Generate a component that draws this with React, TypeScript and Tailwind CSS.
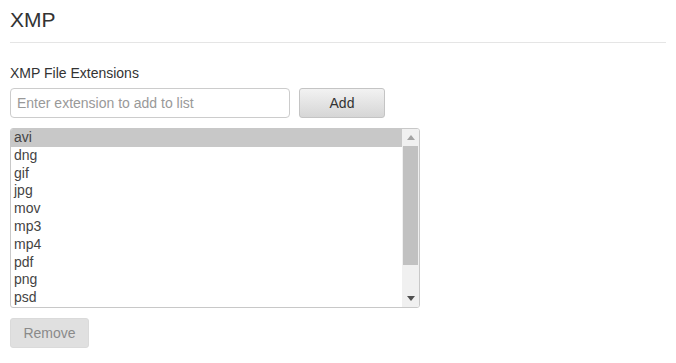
const extensions = ["avi", "dng", "gif", "jpg", "mov", "mp3", "mp4", "pdf", "png", "psd"];

const App = () => {
  return (
    <div className="min-h-screen bg-white px-[10px] pt-[8px] text-[#333] font-['Liberation_Sans',Arial,sans-serif]">
      {/* Section heading */}
      <h3 className="text-[21px] leading-[24px] pb-[10px] border-b border-[#e5e5e5]">XMP</h3>

      <label className="block mt-[22px] text-[14px] leading-[16px]">XMP File Extensions</label>

      {/* Add extension row */}
      <div className="mt-[7px] flex items-center">
        <input
          type="text"
          placeholder="Enter extension to add to list"
          className="w-[280px] h-[30px] px-[6px] text-[14px] border border-[#ccc] rounded-[4px] outline-none placeholder:text-[#999]"
        />
        <button className="ml-[9px] w-[86px] h-[30px] text-[14px] text-[#333] rounded-[3px] border border-[#c4c4c4] bg-gradient-to-b from-[#f2f2f2] to-[#d6d6d6]">
          Add
        </button>
      </div>

      {/* Extension list */}
      <div className="mt-[10px] w-[410px] h-[180px] border border-[#c8c8c8] rounded-[3px] flex overflow-hidden">
        <ul className="flex-1">
          {extensions.map((ext, i) => (
            <li
              key={ext}
              className={`pl-[3px] text-[14px] leading-[17.8px] text-[#444] ${i === 0 ? "bg-[#c8c8c8]" : ""}`}
            >
              {ext}
            </li>
          ))}
        </ul>
        <div className="w-[17px] bg-[#f0f0f0] flex flex-col">
          <div className="h-[17px] flex items-center justify-center">
            <svg width="8" height="5" viewBox="0 0 8 5">
              <path d="M4 0 L8 5 L0 5 Z" fill="#a3a3a3" />
            </svg>
          </div>
          <div className="mx-[1px] h-[119px] bg-[#c1c1c1]" />
          <div className="flex-1" />
          <div className="h-[17px] flex items-center justify-center">
            <svg width="8" height="5" viewBox="0 0 8 5">
              <path d="M0 0 L8 0 L4 5 Z" fill="#505050" />
            </svg>
          </div>
        </div>
      </div>

      <button
        disabled
        className="mt-[10px] w-[79px] h-[30px] text-[14px] text-[#8a8a8a] rounded-[3px] bg-[#e0e0e0] border border-[#dadada]"
      >
        Remove
      </button>
    </div>
  );
};

export default App;
